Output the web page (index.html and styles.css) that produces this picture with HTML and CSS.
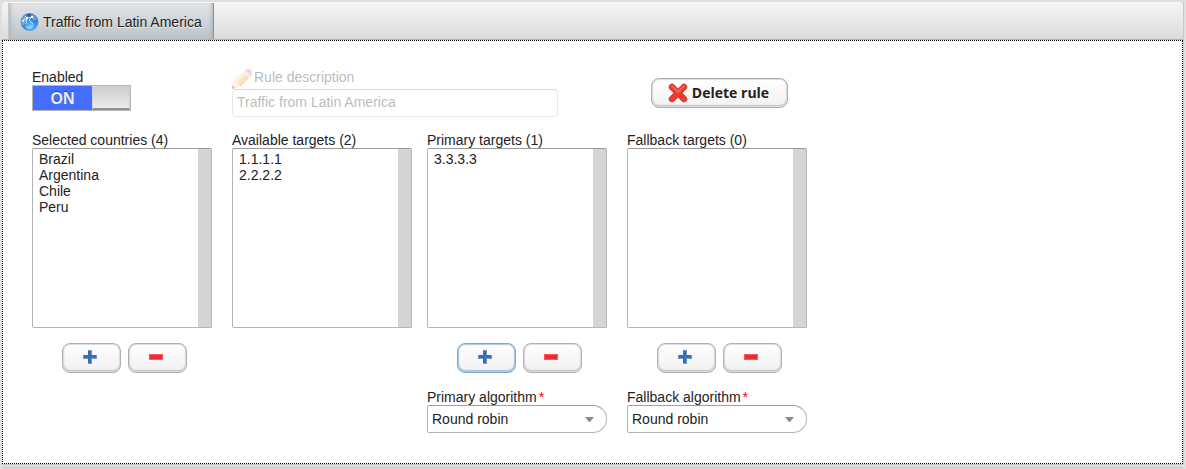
FILE: index.html
```
<!DOCTYPE html>
<html lang="en">
<head>
    <meta charset="UTF-8">
    <meta name="viewport" content="width=device-width, initial-scale=1.0">
    <title>Traffic from Latin America</title>
    <link rel="stylesheet" href="styles.css">
</head>
<body>

    <div class="tabsheet">
        <nav class="tabs">
            <a class="tab" href="#rule">
                <svg width="19" height="18" viewBox="0 0 19 18" aria-hidden="true">
                    <defs>
                        <radialGradient id="globe" cx="55%" cy="75%" r="75%">
                            <stop offset="0" stop-color="#6fc8fc"/>
                            <stop offset="0.5" stop-color="#3388dc"/>
                            <stop offset="1" stop-color="#26509a"/>
                        </radialGradient>
                    </defs>
                    <circle cx="9.500" cy="9" r="8.700" fill="url(#globe)" stroke="#7fa3cc" stroke-width=".6"/>
                    <path d="M1 9l1-4 3-3 2 0-1 3 2 2-3 2-1 3-2 0zM11 1l4 2 2 4-3 0-2-2z" fill="#a9d0f2" opacity=".55"/>
                    <path d="M3 7l4-2 5-1M7 5l-1 6M12 4l-3 3 4 4M5 3l2 2" stroke="#eaf6ff" fill="none" stroke-width=".8"/>
                    <path d="M5 12q4 3 9-1-1 5-5 5-3 0-4-4z" fill="#9be0ff" opacity=".6"/>
                    <circle cx="7" cy="5" r="1.300" fill="#fff"/>
                    <circle cx="12" cy="4" r="1.200" fill="#fff"/>
                    <circle cx="3" cy="8" r="1" fill="#e3f3ff"/>
                </svg>
                Traffic from Latin America
            </a>
        </nav>

        <form class="panel" id="rule">
            <div class="field">
                <label for="enabled">Enabled</label>
                <label class="switch">
                    <span>ON</span>
                    <input type="checkbox" id="enabled" checked>
                </label>
            </div>

            <div class="description">
                <label for="description">
                    <svg width="20" height="20" viewBox="0 0 20 20" aria-hidden="true">
                        <path d="M2 11L11 3l6 6-9 9z" fill="#f5b93a"/>
                        <path d="M2 11L11 3l2 2-9 8z" fill="#ffe48a"/>
                        <path d="M6 15L15 7l2 2-9 9z" fill="#e6952f"/>
                        <path d="M11 3l2-2 6 6-2 2z" fill="#cfcac8"/>
                        <path d="M13 1q1-1 3-1 4 0 4 4 0 2-1 3z" fill="#e0747c"/>
                        <path d="M2 11l2 2 2 2 2 3-8 2z" fill="#eed9b4"/>
                        <path d="M0 16l3 3-3 1z" fill="#444"/>
                    </svg>
                    Rule description
                </label>
                <input type="text" id="description" value="Traffic from Latin America" disabled>
            </div>

            <div class="actions">
                <button type="button" class="button delete">
                    <svg width="20" height="20" viewBox="0 0 20 20" aria-hidden="true">
                        <path d="M4 4l12 12M16 4L4 16" stroke="#b5443c" stroke-width="6.500" stroke-linecap="round"/>
                        <path d="M4 4l12 12M16 4L4 16" stroke="#f0392c" stroke-width="5" stroke-linecap="round"/>
                        <path d="M4 3l6 6 6-6" stroke="#f8604f" stroke-width="2" fill="none" stroke-linecap="round"/>
                    </svg>
                    Delete rule
                </button>
            </div>

            <div class="field">
                <label for="countries">Selected countries (4)</label>
                <select id="countries" class="list" size="10" multiple>
                    <option>Brazil</option>
                    <option>Argentina</option>
                    <option>Chile</option>
                    <option>Peru</option>
                </select>
                <div class="buttons">
                    <button type="button" class="button" aria-label="Add country">
                        <svg width="14" height="14" viewBox="0 0 14 14"><path d="M5 0h4v5h5v4H9v5H5V9H0V5h5z" fill="#6d9ad0"/><path d="M5 1h3v4h5v3H8v5H5V8H1V5h4z" fill="#3c6cab"/></svg>
                    </button>
                    <button type="button" class="button" aria-label="Remove country">
                        <svg width="14" height="14" viewBox="0 0 14 14"><path d="M0 4h14v6H0z" fill="#ff5a5a"/><path d="M1 5h12v4H1z" fill="#ee2b33"/></svg>
                    </button>
                </div>
            </div>

            <div class="field">
                <label for="available">Available targets (2)</label>
                <select id="available" class="list" size="10" multiple>
                    <option>1.1.1.1</option>
                    <option>2.2.2.2</option>
                </select>
            </div>

            <div class="field">
                <label for="primary">Primary targets (1)</label>
                <select id="primary" class="list" size="10" multiple>
                    <option>3.3.3.3</option>
                </select>
                <div class="buttons">
                    <button type="button" class="button focused" aria-label="Add primary target">
                        <svg width="14" height="14" viewBox="0 0 14 14"><path d="M5 0h4v5h5v4H9v5H5V9H0V5h5z" fill="#6d9ad0"/><path d="M5 1h3v4h5v3H8v5H5V8H1V5h4z" fill="#3c6cab"/></svg>
                    </button>
                    <button type="button" class="button" aria-label="Remove primary target">
                        <svg width="14" height="14" viewBox="0 0 14 14"><path d="M0 4h14v6H0z" fill="#ff5a5a"/><path d="M1 5h12v4H1z" fill="#ee2b33"/></svg>
                    </button>
                </div>
                <label for="primary-algorithm">Primary algorithm<span class="required">*</span></label>
                <div class="combo">
                    <select id="primary-algorithm">
                        <option>Round robin</option>
                    </select>
                    <svg width="9" height="5" viewBox="0 0 9 5" aria-hidden="true"><path d="M0 0h9L5 5H4z" fill="#8c8c8c"/></svg>
                </div>
            </div>

            <div class="field">
                <label for="fallback">Fallback targets (0)</label>
                <select id="fallback" class="list" size="10" multiple></select>
                <div class="buttons">
                    <button type="button" class="button" aria-label="Add fallback target">
                        <svg width="14" height="14" viewBox="0 0 14 14"><path d="M5 0h4v5h5v4H9v5H5V9H0V5h5z" fill="#6d9ad0"/><path d="M5 1h3v4h5v3H8v5H5V8H1V5h4z" fill="#3c6cab"/></svg>
                    </button>
                    <button type="button" class="button" aria-label="Remove fallback target">
                        <svg width="14" height="14" viewBox="0 0 14 14"><path d="M0 4h14v6H0z" fill="#ff5a5a"/><path d="M1 5h12v4H1z" fill="#ee2b33"/></svg>
                    </button>
                </div>
                <label for="fallback-algorithm">Fallback algorithm<span class="required">*</span></label>
                <div class="combo">
                    <select id="fallback-algorithm">
                        <option>Round robin</option>
                    </select>
                    <svg width="9" height="5" viewBox="0 0 9 5" aria-hidden="true"><path d="M0 0h9L5 5H4z" fill="#8c8c8c"/></svg>
                </div>
            </div>
        </form>
    </div>

</body>
</html>
```
FILE: styles.css
```
* {
    box-sizing: border-box;
}
body {
    margin: 0;
    padding: 2px 3px 5px 2px;
    background-color: #dfdfdf;
    color: #222;
    font-family: "Liberation Sans", Arial, sans-serif;
    font-size: 14px;
    line-height: 16px;
}
input, select, button {
    font: inherit;
    color: inherit;
    margin: 0;
}
label {
    display: block;
}
.tabsheet {
    box-shadow: 0 1px 0 #c4c4c4, 0 3px 0 #dfdfdf, 0 4px 0 #c4c4c4, 1px 0 0 #c8c8c8;
}
.tabs {
    display: flex;
    height: 38px;
    padding-left: 6px;
    border-top: 1px solid #f8f8f8;
    border-bottom: 1px solid #b4b4b4;
    border-radius: 4px 4px 0 0;
    background: linear-gradient(#f4f4f4, #dcdcdc);
}
.tab {
    display: flex;
    align-items: center;
    gap: 4px;
    padding: 2px 11px 0 11px;
    border-right: 1px solid #8b9194;
    border-left: 1px solid #c5c9cb;
    background: linear-gradient(#e2e6e9, #bcc3c7);
    box-shadow: inset 4px 0 4px -3px #a9b0b4, inset -4px 0 4px -3px #a9b0b4;
    color: #222;
    text-decoration: none;
    text-shadow: 0 1px 0 #eef1f3;
}
.panel {
    display: grid;
    grid-template-columns: 200px 195px 200px 180px;
    row-gap: 15px;
    padding: 28px 29px 30px;
    border: 1px dotted #000;
    background-color: #fff;
}
.field, .combo {
    width: 180px;
}
.switch {
    display: flex;
    width: 99px;
    height: 26px;
    border: 1px solid #b4b4b4;
    background-color: #456efe;
    color: #e9eefc;
    font-size: 16px;
    font-weight: bold;
    line-height: 26px;
    text-align: center;
    text-shadow: 0 -1px 1px #29459f;
}
.switch span {
    flex: 1;
}
.switch input {
    appearance: none;
    width: 38px;
    height: 24px;
    border: 1px solid #d2d2d2;
    border-bottom: 2px solid #909090;
    background: linear-gradient(#cdcdcd, #ececec);
}
.description {
    grid-column: span 2;
    width: 326px;
    opacity: 0.3;
}
.description label {
    display: flex;
    align-items: flex-start;
    gap: 2px;
    height: 20px;
}
.description input {
    display: block;
    width: 100%;
    height: 28px;
    padding: 0 4px 2px;
    border: 1px solid #b4b4b4;
    border-top-color: #808080;
    border-radius: 4px;
    background-color: #fff;
}
.actions {
    padding: 9px 0 0 24px;
}
.list {
    display: block;
    width: 180px;
    height: 180px;
    padding: 2px 0;
    border: 1px solid #b4b4b4;
    border-top-color: #999;
    border-radius: 2px;
    outline: none;
    background: linear-gradient(#d5d5d5, #d5d5d5) right / 13px 100% no-repeat #fff;
    overflow: hidden;
}
.list option {
    min-height: 16px;
    padding: 0 6px;
}
.buttons {
    display: flex;
    gap: 7px;
    padding: 15px 0 16px 30px;
}
.button {
    display: flex;
    align-items: center;
    justify-content: center;
    width: 59px;
    height: 30px;
    padding: 0 4px 2px 0;
    border: 1px solid #b0b0b0;
    border-radius: 8px;
    background: linear-gradient(#fff, #f1f1f1);
    box-shadow: inset 0 0 0 1px #ddd, inset 0 -1px 1px 1px #c4c4c4;
}
.button.focused {
    border-color: #84a6ca;
    box-shadow: inset 0 0 1px 1px #a8c8e8, inset 0 -1px 1px 1px #a8c4e2;
}
.button.delete {
    gap: 4px;
    width: 137px;
    padding: 0 2px 0 0;
    font-family: "Open Sans", "DejaVu Sans", sans-serif;
    font-weight: bold;
}
.required {
    padding-left: 2px;
    color: #f00;
}
.combo {
    display: flex;
    align-items: center;
    height: 28px;
}
.combo select {
    appearance: none;
    width: 100%;
    height: 28px;
    padding: 0 24px 0 4px;
    border: 1px solid #b4b4b4;
    border-top-color: #a0a0a0;
    border-radius: 2px 14px 14px 2px;
    background-color: #fff;
}
.combo svg {
    flex: none;
    margin-left: -22px;
    pointer-events: none;
}
```
